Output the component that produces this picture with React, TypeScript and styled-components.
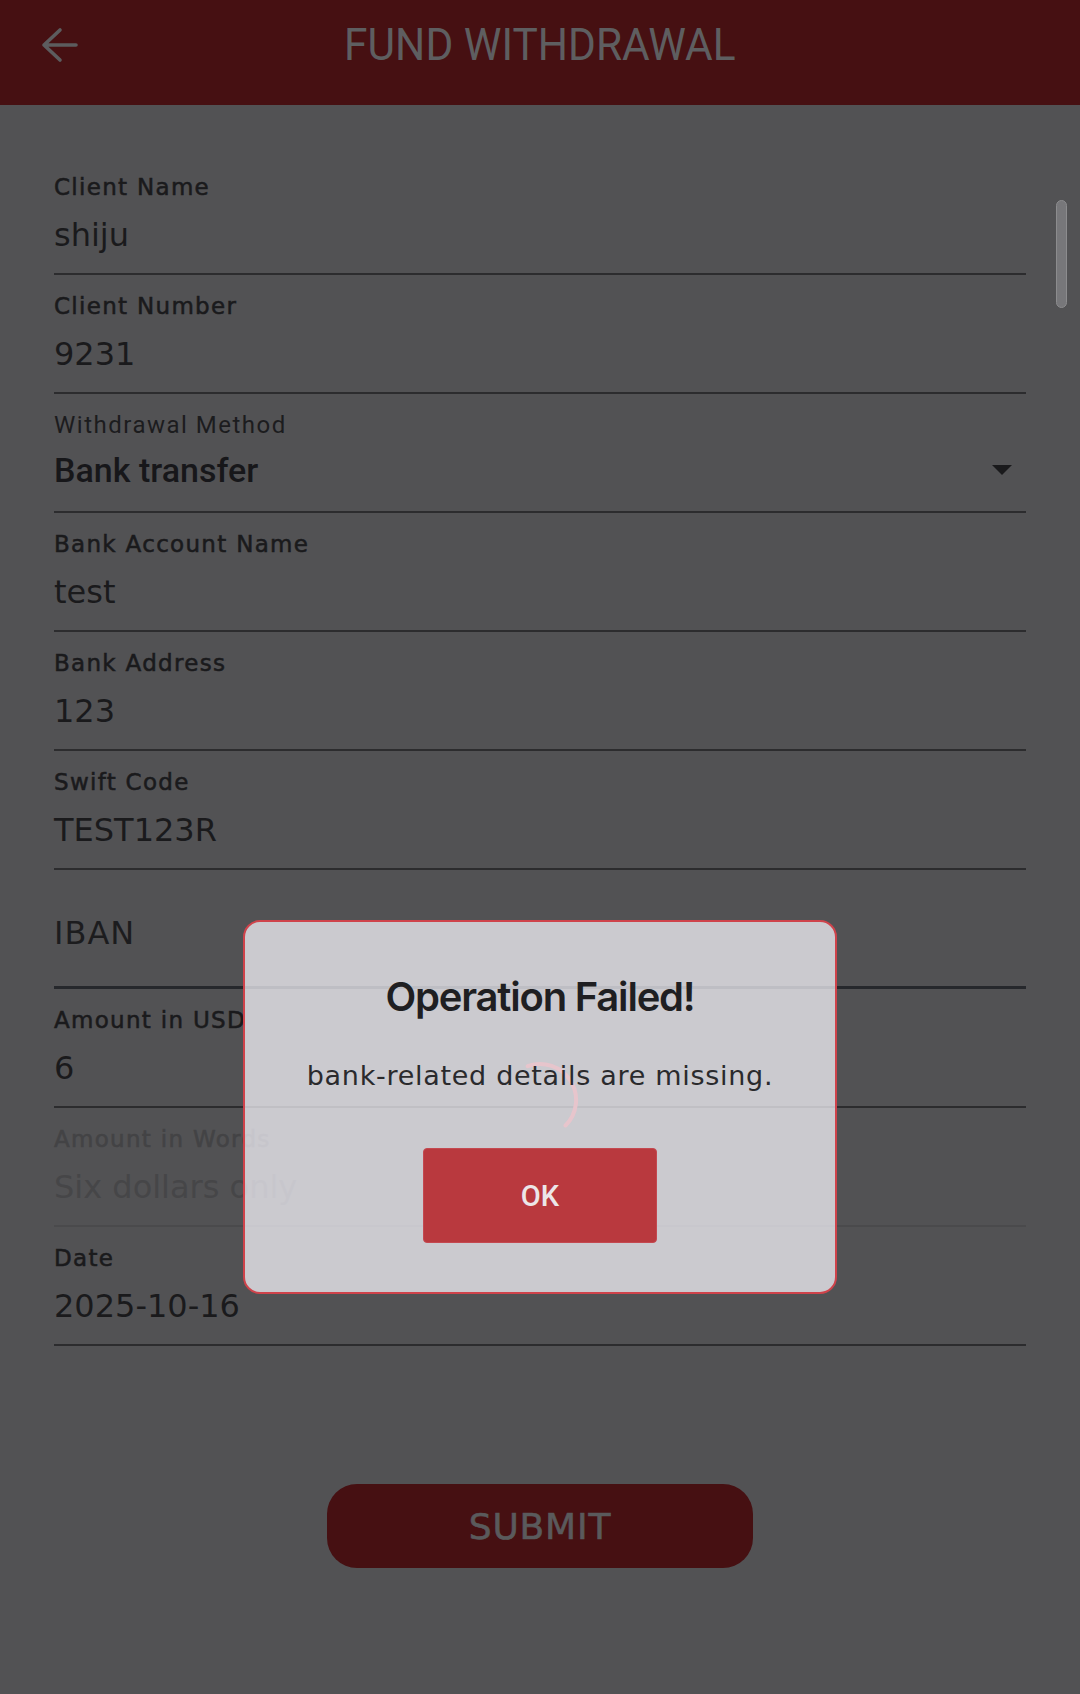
import React from 'react';
import styled, { createGlobalStyle } from 'styled-components';

const GlobalStyle = createGlobalStyle`
  html, body {
    margin: 0;
    padding: 0;
    background: #525254;
  }
  * {
    box-sizing: border-box;
  }
`;

const Screen = styled.div`
  position: relative;
  width: 1080px;
  height: 1694px;
  overflow: hidden;
  background: #525254;
  font-family: 'DejaVu Sans', sans-serif;
`;

const Header = styled.header`
  display: grid;
  grid-template-columns: 1fr auto 1fr;
  align-items: center;
  height: 105px;
  background: #461012;
`;

const BackButton = styled.button`
  justify-self: start;
  display: flex;
  width: 40px;
  height: 40px;
  margin: -15px 0 0 38px;
  padding: 0;
  border: 0;
  background: none;
`;

const Title = styled.h1`
  margin: -15px 0 0;
  font-family: Roboto, sans-serif;
  font-weight: 400;
  font-size: 44px;
  color: #5e5e60;
  transform: scaleX(0.965);
`;

const Form = styled.div`
  display: flex;
  flex-direction: column;
  padding: 51px 54px 0;
`;

const Field = styled.div<{ $faded?: boolean; $strong?: boolean }>`
  position: relative;
  display: flex;
  flex-direction: column;
  height: 119px;
  padding-top: 19px;
  border-bottom: ${(p) => (p.$strong ? '3px solid #26282c' : p.$faded ? '2px solid #4a4a4c' : '2px solid #2c2c2e')};
`;

const Label = styled.div<{ $faded?: boolean }>`
  font-size: 23px;
  line-height: 24px;
  letter-spacing: 1.3px;
  -webkit-text-stroke: 0.55px currentColor;
  color: ${(p) => (p.$faded ? '#434345' : '#1a1a1c')};
`;

const Value = styled.div<{ $faded?: boolean }>`
  margin-top: 16px;
  font-size: 32px;
  line-height: 40px;
  color: ${(p) => (p.$faded ? '#464648' : '#1a1a1c')};
`;

const SelectLabel = styled.div`
  font-family: Roboto, sans-serif;
  font-size: 24px;
  line-height: 24px;
  letter-spacing: 1.5px;
  color: #1c1c1e;
`;

const SelectRow = styled.div`
  display: flex;
  align-items: center;
  justify-content: space-between;
  margin-top: 13px;
  padding-right: 14px;
`;

const SelectValue = styled.div`
  font-family: Roboto, sans-serif;
  font-weight: 500;
  font-size: 34px;
  line-height: 40px;
  color: #17171a;
`;

const Caret = styled.span`
  width: 0;
  height: 0;
  border-left: 10.5px solid transparent;
  border-right: 10.5px solid transparent;
  border-top: 10px solid #1a1a1c;
`;

const Placeholder = styled.div`
  margin-top: 24px;
  font-size: 32px;
  line-height: 40px;
  letter-spacing: 1px;
  color: #1c1c1e;
`;

const SubmitButton = styled.button`
  align-self: center;
  width: 426px;
  height: 84px;
  margin-top: 138px;
  border: 0;
  border-radius: 30px;
  background: #461012;
  font-family: 'DejaVu Sans', sans-serif;
  font-size: 36px;
  letter-spacing: 0.8px;
  -webkit-text-stroke: 0.6px currentColor;
  color: #5a5a5c;
`;

const Scrollbar = styled.div`
  position: absolute;
  top: 200px;
  right: 13px;
  width: 11px;
  height: 108px;
  border: 1px solid #8c8c8e;
  border-radius: 6px;
  background: #77777a;
`;

const Spinner = styled.svg`
  position: absolute;
  left: 500px;
  top: 1060px;
  width: 80px;
  height: 80px;
`;

const Dialog = styled.div`
  position: absolute;
  left: 243px;
  top: 920px;
  width: 594px;
  height: 374px;
  display: flex;
  flex-direction: column;
  align-items: center;
  padding-top: 53px;
  border: 2px solid #cf434b;
  border-radius: 17px;
  background: rgba(250, 248, 255, 0.72);
`;

const DialogTitle = styled.h2`
  margin: 0;
  font-family: Inter, sans-serif;
  font-weight: 600;
  font-size: 40px;
  line-height: 44px;
  letter-spacing: -1.2px;
  color: #1f1f22;
`;

const DialogText = styled.p`
  margin: 40px 0 0;
  font-family: 'DejaVu Sans', sans-serif;
  font-size: 27px;
  line-height: 34px;
  letter-spacing: 0.7px;
  color: #2a2a2d;
`;

const OkButton = styled.button`
  width: 234px;
  height: 95px;
  margin-top: 55px;
  border: 1px solid #c44850;
  border-radius: 4px;
  background: #b9393e;
  font-family: Roboto, sans-serif;
  font-weight: 500;
  font-size: 29px;
  color: #ece6e8;
`;

type Row = { label: string; value: string; faded?: boolean };

const before: Row[] = [
  { label: 'Client Name', value: 'shiju' },
  { label: 'Client Number', value: '9231' },
];

const after: Row[] = [
  { label: 'Bank Account Name', value: 'test' },
  { label: 'Bank Address', value: '123' },
  { label: 'Swift Code', value: 'TEST123R' },
];

const amounts: Row[] = [
  { label: 'Amount in USD', value: '6' },
  { label: 'Amount in Words', value: 'Six dollars only', faded: true },
  { label: 'Date', value: '2025-10-16' },
];

const TextField = ({ label, value, faded }: Row) => (
  <Field $faded={faded}>
    <Label $faded={faded}>{label}</Label>
    <Value $faded={faded}>{value}</Value>
  </Field>
);

export default function App() {
  return (
    <Screen>
      <GlobalStyle />
      <Header>
        <BackButton aria-label="Back">
          <svg width="40" height="40" viewBox="0 0 40 40" fill="none">
            <path
              d="M6 20 L38 20 M22 5 L6 20 L22 35"
              stroke="#5c5c5e"
              strokeWidth="3.6"
              strokeLinecap="round"
              strokeLinejoin="round"
            />
          </svg>
        </BackButton>
        <Title>FUND WITHDRAWAL</Title>
      </Header>

      <Form>
        {before.map((r) => (
          <TextField key={r.label} {...r} />
        ))}
        <Field>
          <SelectLabel>Withdrawal Method</SelectLabel>
          <SelectRow>
            <SelectValue>Bank transfer</SelectValue>
            <Caret />
          </SelectRow>
        </Field>
        {after.map((r) => (
          <TextField key={r.label} {...r} />
        ))}
        <Field $strong>
          <Placeholder>IBAN</Placeholder>
        </Field>
        {amounts.map((r) => (
          <TextField key={r.label} {...r} />
        ))}
        <SubmitButton>SUBMIT</SubmitButton>
      </Form>

      <Scrollbar />

      <Spinner viewBox="0 0 80 80" fill="none">
        <path d="M27.7 6.2 A36 36 0 0 1 65.5 65.5" stroke="#b8404a" strokeWidth="4" strokeLinecap="round" />
      </Spinner>

      <Dialog role="alertdialog">
        <DialogTitle>Operation Failed!</DialogTitle>
        <DialogText>bank-related details are missing.</DialogText>
        <OkButton>OK</OkButton>
      </Dialog>
    </Screen>
  );
}
